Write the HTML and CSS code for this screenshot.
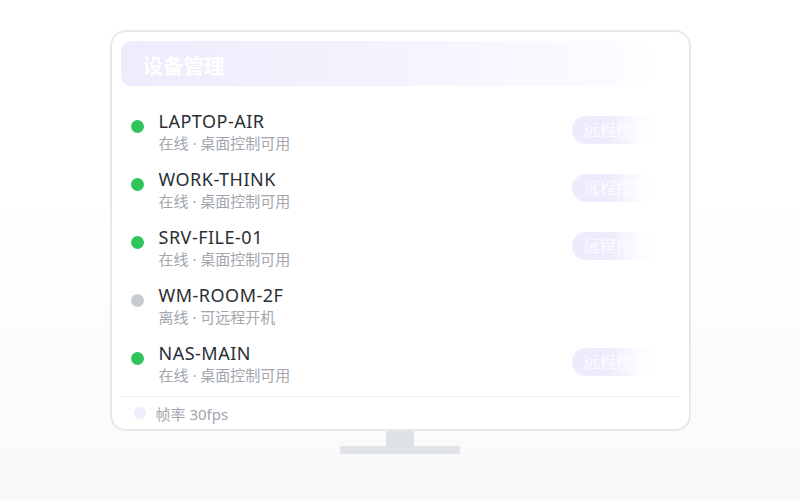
FILE: index.html
```html
<!DOCTYPE html>
<html lang="zh">
<head>
<meta charset="utf-8">
<link rel="stylesheet" href="styles.css">
</head>
<body>
<div class="stage">
  <div class="monitor">
    <div class="screen">
      <div class="header"><span class="title">设备管理</span></div>
      <ul class="list">
        <li class="row">
          <span class="dot on"></span>
          <div class="info"><div class="name">LAPTOP-AIR</div><div class="sub">在线 · 桌面控制可用</div></div>
          <span class="btn">远程控制</span>
        </li>
        <li class="row">
          <span class="dot on"></span>
          <div class="info"><div class="name">WORK-THINK</div><div class="sub">在线 · 桌面控制可用</div></div>
          <span class="btn">远程控制</span>
        </li>
        <li class="row">
          <span class="dot on"></span>
          <div class="info"><div class="name">SRV-FILE-01</div><div class="sub">在线 · 桌面控制可用</div></div>
          <span class="btn">远程控制</span>
        </li>
        <li class="row">
          <span class="dot off"></span>
          <div class="info"><div class="name">WM-ROOM-2F</div><div class="sub">离线 · 可远程开机</div></div>
        </li>
        <li class="row">
          <span class="dot on"></span>
          <div class="info"><div class="name">NAS-MAIN</div><div class="sub">在线 · 桌面控制可用</div></div>
          <span class="btn">远程控制</span>
        </li>
      </ul>
      <div class="footer"><span class="fdot"></span><span class="ftext">帧率 30fps</span></div>
      <div class="fade"></div>
    </div>
    <div class="neck"></div>
    <div class="base"></div>
  </div>
</div>
</body>
</html>
```

FILE: styles.css
```css
html, body {
  margin: 0;
  padding: 0;
  height: 100%;
}
body {
  background: linear-gradient(180deg, #ffffff 0%, #ffffff 40%, #f9f9fb 100%);
  font-family: "Noto Sans", "Noto Sans CJK SC", sans-serif;
}
.stage {
  display: flex;
  justify-content: center;
  padding-top: 30px;
}
.monitor {
  display: flex;
  flex-direction: column;
  align-items: center;
}
.screen {
  position: relative;
  box-sizing: border-box;
  width: 581px;
  height: 401px;
  border: 2px solid #e6e8ec;
  border-radius: 16px;
  background: #ffffff;
  padding: 9px 9px 0 9px;
  display: flex;
  flex-direction: column;
  overflow: hidden;
}
.header {
  flex: none;
  height: 45px;
  border-radius: 10px;
  background: linear-gradient(90deg, #efebfd 0%, #f5f2fe 45%, #faf9ff 80%, #fdfcff 100%);
  display: flex;
  align-items: center;
  padding-left: 22px;
}
.title {
  color: #ffffff;
  font-family: "Noto Sans CJK SC", sans-serif;
  font-weight: 700;
  font-size: 20.5px;
  line-height: 1;
  margin-top: 3px;
}
.list {
  list-style: none;
  margin: 0;
  padding: 22px 0 0 0;
}
.row {
  height: 58px;
  display: flex;
  align-items: flex-start;
  padding-left: 10px;
  padding-right: 21px;
}
.row:last-child {
  height: 52px;
}
.dot {
  width: 13px;
  height: 13px;
  border-radius: 50%;
  margin-top: 12px;
  flex: none;
}
.dot.on { background: #2fc55a; }
.dot.off { background: #c8ccd2; }
.info {
  margin-left: 15px;
  padding-top: 1px;
  flex: 1;
}
.name {
  font-size: 18px;
  letter-spacing: 0.5px;
  line-height: 24px;
  color: #2a2e35;
}
.sub {
  font-family: "Noto Sans", "Noto Sans CJK SC", sans-serif;
  font-size: 15px;
  line-height: 20px;
  color: #a2a6ad;
}
.btn {
  margin-top: 8px;
  height: 28px;
  padding: 0 11px;
  border-radius: 14px;
  background: #efebfd;
  color: #ffffff;
  font-family: "Noto Serif CJK SC", serif;
  font-size: 16px;
  line-height: 28px;
  flex: none;
}
.footer {
  flex: none;
  margin-top: auto;
  border-top: 1px solid #eceef1;
  height: 32px;
  display: flex;
  align-items: center;
  padding-left: 13px;
}
.fdot {
  width: 12px;
  height: 12px;
  border-radius: 50%;
  background: #efecfc;
}
.ftext {
  margin-left: 10px;
  font-family: "Noto Sans", "Noto Sans CJK SC", sans-serif;
  font-size: 15px;
  color: #a2a6ad;
}
.fade {
  position: absolute;
  top: 0;
  right: 0;
  width: 80px;
  bottom: 45px;
  background: linear-gradient(90deg, rgba(255,255,255,0) 0%, rgba(255,255,255,0.85) 40%, #ffffff 60%);
  pointer-events: none;
}
.neck {
  width: 28px;
  height: 15px;
  background: #dfe3e8;
}
.base {
  width: 120px;
  height: 8px;
  background: #dfe3e8;
}
```
